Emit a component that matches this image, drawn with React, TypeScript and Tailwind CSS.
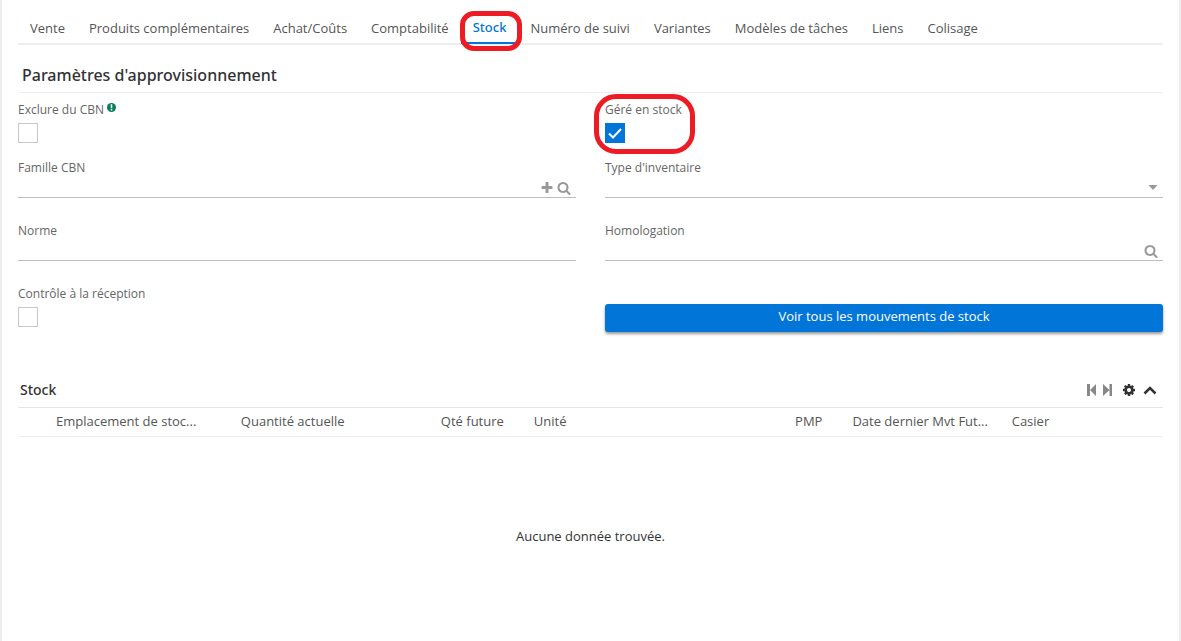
import type { ReactNode } from "react";

const tabs = [
  "Vente",
  "Produits complémentaires",
  "Achat/Coûts",
  "Comptabilité",
  "Stock",
  "Numéro de suivi",
  "Variantes",
  "Modèles de tâches",
  "Liens",
  "Colisage",
];

const columns = [
  { label: "Emplacement de stoc...", numeric: false },
  { label: "Quantité actuelle", numeric: true },
  { label: "Qté future", numeric: true },
  { label: "Unité", numeric: false },
  { label: "PMP", numeric: true },
  { label: "Date dernier Mvt Fut...", numeric: false },
  { label: "Casier", numeric: false },
];

const icons = {
  search:
    "M1216 832q0-185-131.5-316.5t-316.5-131.5-316.5 131.5-131.5 316.5 131.5 316.5 316.5 131.5 316.5-131.5 131.5-316.5zm512 832q0 52-38 90t-90 38q-54 0-90-38l-343-342q-179 124-399 124-143 0-273.5-55.5t-225-150-150-225-55.5-273.5 55.5-273.5 150-225 225-150 273.5-55.5 273.5 55.5 225 150 150 225 55.5 273.5q0 220-124 399l343 343q37 37 37 90z",
  plus: "M1600 736v192q0 40-28 68t-68 28h-416v416q0 40-28 68t-68 28h-192q-40 0-68-28t-28-68v-416h-416q-40 0-68-28t-28-68v-192q0-40 28-68t68-28h416v-416q0-40 28-68t68-28h192q40 0 68 28t28 68v416h416q40 0 68 28t28 68z",
  cog: "M1152 896q0-106-75-181t-181-75-181 75-75 181 75 181 181 75 181-75 75-181zm512-109v222q0 12-8 23t-20 13l-185 28q-19 54-39 91 35 50 107 138 10 12 10 25t-9 23q-27 37-99 108t-94 71q-12 0-26-9l-138-108q-44 23-91 38-16 136-29 186-7 28-36 28h-222q-14 0-24.5-8.5t-11.5-21.5l-28-184q-49-16-90-37l-141 107q-10 9-25 9-14 0-25-11-126-114-165-168-7-10-7-23 0-12 8-23 15-21 51-66.5t54-70.5q-27-50-41-99l-183-27q-13-2-21-12.5t-8-23.5v-222q0-12 8-23t19-13l186-28q14-46 39-92-40-57-107-138-10-12-10-24 0-10 9-23 26-36 98.5-107.5t94.5-71.5q13 0 26 10l138 107q44-23 91-38 16-136 29-186 7-28 36-28h222q14 0 24.5 8.5t11.5 21.5l28 184q49 16 90 37l142-107q9-9 24-9 13 0 25 10 129 119 165 170 7 8 7 22 0 12-8 23-15 21-51 66.5t-54 70.5q26 50 41 98l183 28q13 2 21 12.5t8 23.5z",
};

function Icon({ name }: { name: keyof typeof icons }) {
  return (
    <svg viewBox="0 0 1792 1792" className="size-3.5" fill="currentColor" aria-hidden="true">
      <path d={icons[name]} />
    </svg>
  );
}

function CheckField({ id, label, checked, hint }: { id: string; label: string; checked?: boolean; hint?: ReactNode }) {
  return (
    <div>
      <div className="flex h-5 items-center gap-[3px]">
        <label htmlFor={id} className="text-xs text-[#666]">
          {label}
        </label>
        {hint}
      </div>
      <div className="mt-[3px] grid size-5">
        <input
          id={id}
          type="checkbox"
          defaultChecked={checked}
          className="peer col-start-1 row-start-1 size-5 appearance-none border border-[#c8c8c8] bg-white checked:border-[#0275d8] checked:bg-[#0275d8]"
        />
        <svg
          viewBox="0 0 20 20"
          className="pointer-events-none invisible col-start-1 row-start-1 size-5 peer-checked:visible"
          fill="none"
          aria-hidden="true"
        >
          <path d="M4 10.5l4 4 8-8.500" stroke="#fff" strokeWidth="2" />
        </svg>
      </div>
    </div>
  );
}

function TextField({ id, label, children }: { id: string; label: string; children?: ReactNode }) {
  return (
    <div className="pb-2">
      <label htmlFor={id} className="block text-xs leading-5 text-[#666]">
        {label}
      </label>
      <div className="flex h-5 items-center border-b border-[#bdbdbd] pr-[5px] text-[#999]">
        <input id={id} type="text" className="h-full min-w-0 flex-1 bg-transparent text-[13px] text-[#333] outline-none" />
        {children}
      </div>
    </div>
  );
}

export default function App() {
  return (
    <main className="min-h-screen border-x-2 border-[#ededed] bg-white px-4 font-['Open_Sans',sans-serif] text-[13px] text-[#555]">
      <nav className="flex border-b-2 border-[#eee] pt-3">
        {tabs.map((tab) => {
          const active = tab === "Stock";
          return (
            <a
              key={tab}
              href="#"
              className={
                active
                  ? "relative -mb-px border-b-2 border-[#0275d8] px-3 pt-1.5 pb-1.5 font-['Noto_Sans','Open_Sans',sans-serif] leading-[18px] font-medium text-[#0275d8]"
                  : "px-3 pt-[7px] pb-1.5 leading-[18px]"
              }
            >
              {tab}
              {active && (
                <span className="pointer-events-none absolute -top-px -right-1 -left-px h-10 rounded-[14px] border-5 border-[#ed1c24]" />
              )}
            </a>
          );
        })}
      </nav>

      <section>
        <h2 className="border-b border-[#eee] px-1 pt-[18px] pb-[5px] font-['Noto_Sans','Open_Sans',sans-serif] text-base leading-6 font-medium text-[#333]">
          Paramètres d'approvisionnement
        </h2>

        <div className="grid grid-cols-2 gap-x-[29px] gap-y-[15px] pt-[7px]">
          <CheckField
            id="exclure"
            label="Exclure du CBN"
            hint={
              <svg viewBox="0 0 10 10" className="mb-1.5 size-[9px]" aria-hidden="true">
                <circle cx="5" cy="5" r="5" fill="#087f5b" />
                <path d="M5 1.500v4.200M5 6.800v1.500" stroke="#fff" strokeWidth="1.700" />
              </svg>
            }
          />
          <div className="relative">
            <CheckField id="gere" label="Géré en stock" checked />
            <span className="pointer-events-none absolute -top-1.5 -left-[11px] h-[60px] w-[101px] rounded-[22px] border-5 border-[#ed1c24]" />
          </div>

          <TextField id="famille" label="Famille CBN">
            <button type="button" aria-label="Ajouter" className="mr-[3px]">
              <Icon name="plus" />
            </button>
            <button type="button" aria-label="Rechercher une famille">
              <Icon name="search" />
            </button>
          </TextField>
          <TextField id="inventaire" label="Type d'inventaire">
            <button type="button" aria-label="Ouvrir la liste">
              <svg viewBox="0 0 10 5" className="h-[5px] w-2.5" fill="currentColor" aria-hidden="true">
                <path d="M0.500 0h9L5 5z" />
              </svg>
            </button>
          </TextField>

          <TextField id="norme" label="Norme" />
          <TextField id="homologation" label="Homologation">
            <button type="button" aria-label="Rechercher une homologation">
              <Icon name="search" />
            </button>
          </TextField>

          <CheckField id="controle" label="Contrôle à la réception" />
          <button
            type="button"
            className="mt-5 h-7 rounded-[3px] bg-[#0275d8] pb-0.5 text-[13px] text-white shadow-[0_2px_3px_rgba(0,0,0,0.4)]"
          >
            Voir tous les mouvements de stock
          </button>
        </div>
      </section>

      <section className="mt-12">
        <div className="flex h-7 items-start justify-between border-b border-[#e5e5e5] pr-1.5 pl-0.5">
          <h2 className="font-['Noto_Sans','Open_Sans',sans-serif] text-sm leading-5 font-medium text-[#333]">Stock</h2>
          <div className="flex h-5 items-center text-[#333]">
            <button type="button" aria-label="Page précédente" className="mr-[7px] text-[#888]">
              <svg viewBox="0 0 9 12" className="h-3 w-[9px]" fill="currentColor" aria-hidden="true">
                <path d="M0 0h3v12H0zM9 0v12L3 6z" />
              </svg>
            </button>
            <button type="button" aria-label="Page suivante" className="mr-2.5 text-[#888]">
              <svg viewBox="0 0 9 12" className="h-3 w-[9px]" fill="currentColor" aria-hidden="true">
                <path d="M6.500 0h2.500v12H6.500zM0 0v12l6.500-6z" />
              </svg>
            </button>
            <button type="button" aria-label="Options" className="mr-[7px]">
              <Icon name="cog" />
            </button>
            <button type="button" aria-label="Replier">
              <svg viewBox="0 0 14 10" className="h-2.5 w-3.5" fill="none" aria-hidden="true">
                <path d="M1.500 8.500L7 3l5.500 5.500" stroke="currentColor" strokeWidth="2.500" />
              </svg>
            </button>
          </div>
        </div>

        <table className="w-full table-fixed">
          <thead>
            <tr className="h-7 border-b border-[#eee]">
              <td className="w-[30px]" />
              {columns.map((col) => (
                <th
                  key={col.label}
                  scope="col"
                  className={
                    col.numeric
                      ? "pr-[22px] text-right font-normal whitespace-nowrap"
                      : "pl-2 text-left font-normal whitespace-nowrap"
                  }
                >
                  {col.label}
                </th>
              ))}
            </tr>
          </thead>
          <tbody>
            <tr>
              <td colSpan={8} className="h-[200px] text-center text-[#333]">
                Aucune donnée trouvée.
              </td>
            </tr>
          </tbody>
        </table>
      </section>
    </main>
  );
}
